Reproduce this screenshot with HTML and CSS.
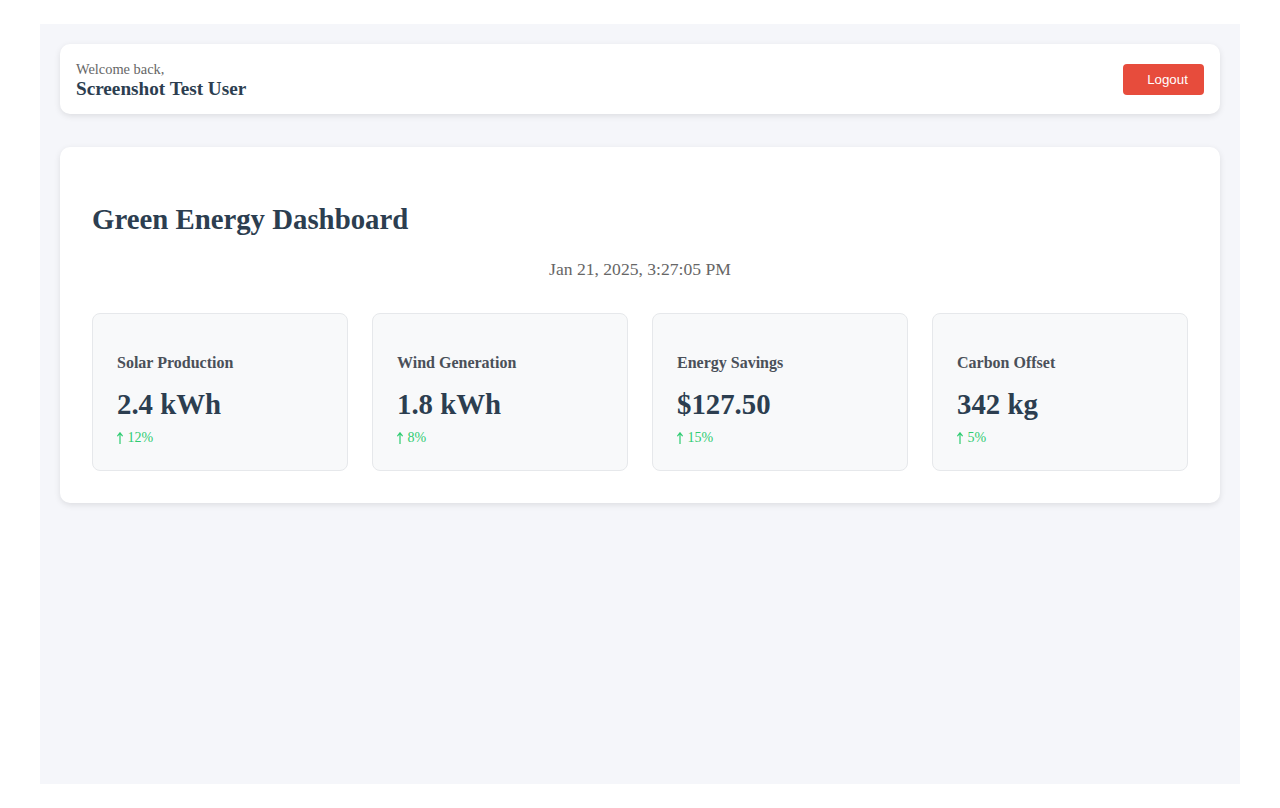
FILE: index.html
```html
<!DOCTYPE html>
<html>
<head>
<meta charset="utf-8">
<link rel="stylesheet" href="styles.css">
</head>
<body>
<div class="app">
  <header class="topbar">
    <div class="user">
      <div class="welcome">Welcome back,</div>
      <div class="name">Screenshot Test User</div>
    </div>
    <button class="logout">Logout</button>
  </header>
  <main class="panel">
    <h1 class="title">Green Energy Dashboard</h1>
    <p class="date">Jan 21, 2025, 3:27:05 PM</p>
    <div class="stats">
      <div class="stat">
        <h3 class="stat-label">Solar Production</h3>
        <p class="stat-value">2.4 kWh</p>
        <p class="stat-change"><svg class="arrow" viewBox="0 0 6 12" aria-label="up"><path d="M3 0.8V12M0.4 4.2L3 0.8L5.6 4.2"/></svg> 12%</p>
      </div>
      <div class="stat">
        <h3 class="stat-label">Wind Generation</h3>
        <p class="stat-value">1.8 kWh</p>
        <p class="stat-change"><svg class="arrow" viewBox="0 0 6 12" aria-label="up"><path d="M3 0.8V12M0.4 4.2L3 0.8L5.6 4.2"/></svg> 8%</p>
      </div>
      <div class="stat">
        <h3 class="stat-label">Energy Savings</h3>
        <p class="stat-value">$127.50</p>
        <p class="stat-change"><svg class="arrow" viewBox="0 0 6 12" aria-label="up"><path d="M3 0.8V12M0.4 4.2L3 0.8L5.6 4.2"/></svg> 15%</p>
      </div>
      <div class="stat">
        <h3 class="stat-label">Carbon Offset</h3>
        <p class="stat-value">342 kg</p>
        <p class="stat-change"><svg class="arrow" viewBox="0 0 6 12" aria-label="up"><path d="M3 0.8V12M0.4 4.2L3 0.8L5.6 4.2"/></svg> 5%</p>
      </div>
    </div>
  </main>
</div>
</body>
</html>
```
FILE: styles.css
```css
html, body {
  margin: 0;
  padding: 0;
  background: #ffffff;
}
body {
  font-family: "Liberation Serif", "Times New Roman", serif;
  padding: 24px 40px;
}
.app {
  background: #f5f6fa;
  height: 760px;
  padding: 20px;
  box-sizing: border-box;
}
.topbar {
  background: #ffffff;
  border-radius: 10px;
  box-shadow: 0 2px 6px rgba(0, 0, 0, 0.1);
  height: 70px;
  box-sizing: border-box;
  padding: 0 16px;
  display: flex;
  align-items: center;
  justify-content: space-between;
}
.user {
  padding-top: 1px;
}
.welcome {
  font-size: 14.4px;
  color: #666666;
  line-height: 17px;
}
.name {
  font-size: 19.2px;
  font-weight: bold;
  color: #2c3e50;
  line-height: 21px;
}
.logout {
  background: #e74c3c;
  color: #ffffff;
  border: none;
  border-radius: 4px;
  font-family: "Liberation Sans", Arial, sans-serif;
  font-size: 13.3px;
  font-weight: 500;
  width: 81px;
  height: 31px;
  padding: 0 0 0 8px;
}
.panel {
  background: #ffffff;
  border-radius: 10px;
  box-shadow: 0 2px 6px rgba(0, 0, 0, 0.1);
  margin-top: 33px;
  padding: 32px;
}
.title {
  font-size: 28.8px;
  color: #2c3e50;
  margin: 24px 0 23px;
}
.date {
  text-align: center;
  color: #666666;
  font-size: 17.6px;
  margin: 0 0 33px;
}
.stats {
  display: grid;
  grid-template-columns: repeat(4, 1fr);
  gap: 24px;
}
.stat {
  background: #f8f9fa;
  border: 1px solid #e6e8eb;
  border-radius: 8px;
  padding: 24px;
}
.stat-label {
  font-size: 16px;
  color: #4a5059;
  margin: 16px 0 16px;
}
.stat-value {
  font-size: 28.8px;
  font-weight: bold;
  color: #2c3e50;
  margin: 0 0 9px;
}
.stat-change {
  font-size: 14px;
  color: #2ecc71;
  margin: 0;
}
.arrow {
  width: 6px;
  height: 12px;
  margin-right: 1px;
  vertical-align: -2px;
  fill: none;
  stroke: currentColor;
  stroke-width: 1.2;
}
```
